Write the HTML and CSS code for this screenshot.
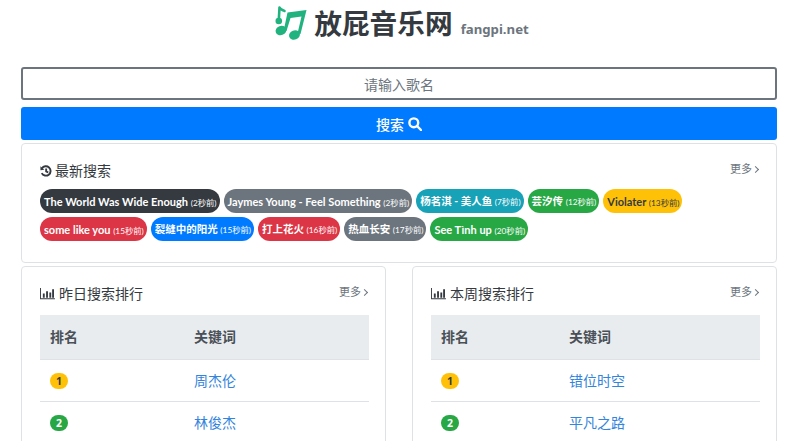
FILE: index.html
```html
<!DOCTYPE html>
<html lang="zh-CN">

<head>
    <meta charset="UTF-8">
    <meta name="viewport" content="width=device-width, initial-scale=1.0">
    <title>放屁音乐网</title>
    <link rel="stylesheet" href="styles.css">
</head>

<body>
    <div class="container">
        <header class="brand">
            <svg class="brand-logo" viewBox="0 0 34 36" aria-hidden="true">
                <path class="logo-line" d="M5.500 2.500 L4.800 15 M5.500 2.500 C6.500 5 9 5 10.500 6" />
                <circle class="logo-fill" cx="4.800" cy="16" r="3.300" />
                <path class="logo-fill" d="M13.500 7.500 L32.500 5 L26.500 29 L23.500 28.500 L27.500 11.500 L16.500 13 L12.500 26 L9.800 25 Z" />
                <ellipse class="logo-fill" cx="7" cy="25.500" rx="5.500" ry="4.600" transform="rotate(-20 7 25.500)" />
                <ellipse class="logo-fill" cx="20.500" cy="30" rx="5.500" ry="4.600" transform="rotate(-20 20.500 30)" />
            </svg>
            <h1 class="brand-name">放屁音乐网</h1>
            <span class="brand-domain">fangpi.net</span>
        </header>

        <form class="search-form">
            <input class="search-input" type="text" placeholder="请输入歌名">
            <button class="search-button" type="button">搜索
                <svg class="search-icon" viewBox="0 0 14 14" aria-hidden="true">
                    <circle cx="5.800" cy="5.800" r="4.400" />
                    <path d="M9 9 L13 13" />
                </svg>
            </button>
        </form>

        <section class="card latest">
            <div class="card-head">
                <h2 class="card-title">
                    <svg class="title-icon" viewBox="0 0 14 14" aria-hidden="true">
                        <path class="line-icon" d="M2.200 4 A5.500 5.500 0 1 1 2 9.500 M7.200 4 V7.400 L9.600 8.800" />
                        <path class="fill-icon" d="M0.500 1.500 L5 5.600 L0.500 6 Z" />
                    </svg>
                    最新搜索
                </h2>
                <a class="more" href="#">更多 <span class="chevron"></span></a>
            </div>
            <div class="tags">
                <a class="tag tag-dark" href="#">The World Was Wide Enough <small>(2秒前)</small></a>
                <a class="tag tag-grey" href="#">Jaymes Young - Feel Something <small>(2秒前)</small></a>
                <a class="tag tag-zh tag-teal" href="#">杨茗淇 - 美人鱼 <small>(7秒前)</small></a>
                <a class="tag tag-zh tag-green" href="#">芸汐传 <small>(12秒前)</small></a>
                <a class="tag tag-yellow" href="#">Violater <small>(13秒前)</small></a>
                <a class="tag tag-red" href="#">some like you <small>(15秒前)</small></a>
                <a class="tag tag-zh tag-blue" href="#">裂缝中的阳光 <small>(15秒前)</small></a>
                <a class="tag tag-zh tag-red" href="#">打上花火 <small>(16秒前)</small></a>
                <a class="tag tag-zh tag-grey" href="#">热血长安 <small>(17秒前)</small></a>
                <a class="tag tag-green" href="#">See Tình up <small>(20秒前)</small></a>
            </div>
        </section>

        <div class="ranks">
            <section class="card">
                <div class="card-head">
                    <h2 class="card-title">
                        <svg class="title-icon bars" viewBox="0 0 16 14" aria-hidden="true">
                            <path class="fill-icon" d="M0 1h1v11h15v1.200H0z M3 7h2v4.500H3z M6.500 4.500h2v7h-2z M10 6h2v5.500h-2z M13 2.500h2v9h-2z" />
                        </svg>
                        昨日搜索排行
                    </h2>
                    <a class="more" href="#">更多 <span class="chevron"></span></a>
                </div>
                <table class="rank-table day">
                    <thead>
                        <tr><th class="col-rank">排名</th><th>关键词</th></tr>
                    </thead>
                    <tbody>
                        <tr><td><span class="badge badge-yellow">1</span></td><td><a href="#">周杰伦</a></td></tr>
                        <tr><td><span class="badge badge-green">2</span></td><td><a href="#">林俊杰</a></td></tr>
                    </tbody>
                </table>
            </section>

            <section class="card">
                <div class="card-head">
                    <h2 class="card-title">
                        <svg class="title-icon bars" viewBox="0 0 16 14" aria-hidden="true">
                            <path class="fill-icon" d="M0 1h1v11h15v1.200H0z M3 7h2v4.500H3z M6.500 4.500h2v7h-2z M10 6h2v5.500h-2z M13 2.500h2v9h-2z" />
                        </svg>
                        本周搜索排行
                    </h2>
                    <a class="more" href="#">更多 <span class="chevron"></span></a>
                </div>
                <table class="rank-table week">
                    <thead>
                        <tr><th class="col-rank">排名</th><th>关键词</th></tr>
                    </thead>
                    <tbody>
                        <tr><td><span class="badge badge-yellow">1</span></td><td><a href="#">错位时空</a></td></tr>
                        <tr><td><span class="badge badge-green">2</span></td><td><a href="#">平凡之路</a></td></tr>
                    </tbody>
                </table>
            </section>
        </div>
    </div>
</body>

</html>
```

FILE: styles.css
```css
/* General styles */
* {
    box-sizing: border-box;
    margin: 0;
    padding: 0;
}

html, body {
    height: 441px;
    overflow: hidden;
}

body {
    background-color: #fff;
    color: #343a40;
    font-family: "Noto Sans", "Noto Sans CJK SC", sans-serif;
    font-size: 14px;
    line-height: 1.5;
}

a {
    text-decoration: none;
}

.container {
    width: 756px;
    margin-left: 21px;
}

/* Brand */
.brand {
    display: flex;
    align-items: center;
    justify-content: center;
    height: 58px;
    padding: 0 0 12px 5px;
}

.brand-logo {
    width: 34px;
    height: 36px;
    margin-right: 6px;
}

.logo-line {
    fill: none;
    stroke: #20b27f;
    stroke-width: 2.600;
    stroke-linecap: round;
}

.logo-fill {
    fill: #20b27f;
}

.brand-name {
    color: #343a40;
    font-size: 27.700px;
    font-weight: 700;
    line-height: 36px;
}

.brand-domain {
    margin: 14px 0 0 8px;
    color: #6c757d;
    font-size: 13.200px;
    font-weight: 700;
}

/* Search */
.search-form {
    padding-top: 9px;
}

.search-input {
    display: block;
    width: 100%;
    height: 33px;
    padding-top: 2px;
    border: 2px solid #6c757d;
    border-radius: 3px;
    color: #495057;
    font-family: inherit;
    font-size: 14px;
    text-align: center;
    outline: none;
}

.search-input::placeholder {
    color: #6c757d;
}

.search-button {
    display: flex;
    align-items: center;
    justify-content: center;
    gap: 4px;
    width: 100%;
    height: 33px;
    margin-top: 7px;
    border: none;
    border-radius: 3px;
    background-color: #007bff;
    color: #fff;
    font-family: inherit;
    font-size: 14px;
    font-weight: 500;
}

.search-icon {
    width: 14px;
    height: 14px;
    fill: none;
    stroke: #fff;
    stroke-width: 2.400;
    stroke-linecap: round;
}

/* Cards */
.card {
    margin-top: 3px;
    padding: 16px 16px 18px 18px;
    border: 1px solid #dfe2e5;
    border-radius: 4px;
    background-color: #fff;
}

.latest {
    height: 120px;
}

.card-head {
    display: flex;
    justify-content: space-between;
    align-items: flex-start;
}

.card-title {
    display: flex;
    align-items: center;
    gap: 4px;
    color: #343a40;
    font-size: 14px;
    font-weight: 400;
    line-height: 21px;
}

.latest .card-title {
    gap: 3px;
}

.title-icon {
    height: 12px;
    width: 12px;
}

.title-icon.bars {
    height: 13px;
    width: 15px;
}

.fill-icon {
    fill: #343a40;
}

.line-icon {
    fill: none;
    stroke: #343a40;
    stroke-width: 2.200;
}

.more {
    display: flex;
    align-items: center;
    gap: 1px;
    margin: 1px 2px 0 0;
    color: #6c757d;
    font-size: 11px;
    line-height: 16px;
}

.chevron {
    width: 5px;
    height: 5px;
    border-top: 1px solid #6c757d;
    border-right: 1px solid #6c757d;
    transform: rotate(45deg);
}

/* Tags */
.tags {
    display: flex;
    flex-wrap: wrap;
    gap: 4px;
    margin-top: 8px;
}

.tag {
    display: block;
    height: 24px;
    padding: 0 3px 0 4px;
    border-radius: 12px;
    color: #fff;
    font-family: Lato, "Noto Sans CJK SC", sans-serif;
    font-size: 11px;
    font-weight: 700;
    line-height: 25px;
    white-space: nowrap;
}

.tag-zh {
    font-size: 10.500px;
}

.tag small {
    font-size: 8.300px;
    font-weight: 400;
}

.tag-dark { background-color: #343a40; }
.tag-grey { background-color: #6c757d; }
.tag-teal { background-color: #17a2b8; }
.tag-green { background-color: #28a745; }
.tag-yellow { background-color: #ffc107; color: #343a40; }
.tag-red { background-color: #dc3545; }
.tag-blue { background-color: #007bff; }

/* Rank tables */
.ranks {
    display: grid;
    grid-template-columns: 365px 365px;
    justify-content: space-between;
}

.rank-table {
    width: 100%;
    margin-top: 11px;
    border-collapse: collapse;
    table-layout: fixed;
}

.rank-table th,
.rank-table td {
    height: 42px;
    padding: 0 10px;
    text-align: left;
    vertical-align: middle;
}

.rank-table th {
    height: 44px;
    background-color: #e9ecef;
    color: #495057;
    font-weight: 700;
    border-bottom: 1px solid #dee2e6;
}

.rank-table td {
    border-bottom: 1px solid #dee2e6;
}

.rank-table a {
    color: #3384dc;
}

.day .col-rank {
    width: 144px;
}

.week .col-rank {
    width: 128px;
}

.badge {
    display: block;
    width: 18px;
    height: 16px;
    margin-top: 2px;
    border-radius: 8px;
    color: #fff;
    font-size: 10.500px;
    font-weight: 700;
    line-height: 16px;
    text-align: center;
}

.badge-yellow {
    background-color: #ffc107;
    color: #343a40;
}

.badge-green {
    background-color: #28a745;
}
```
